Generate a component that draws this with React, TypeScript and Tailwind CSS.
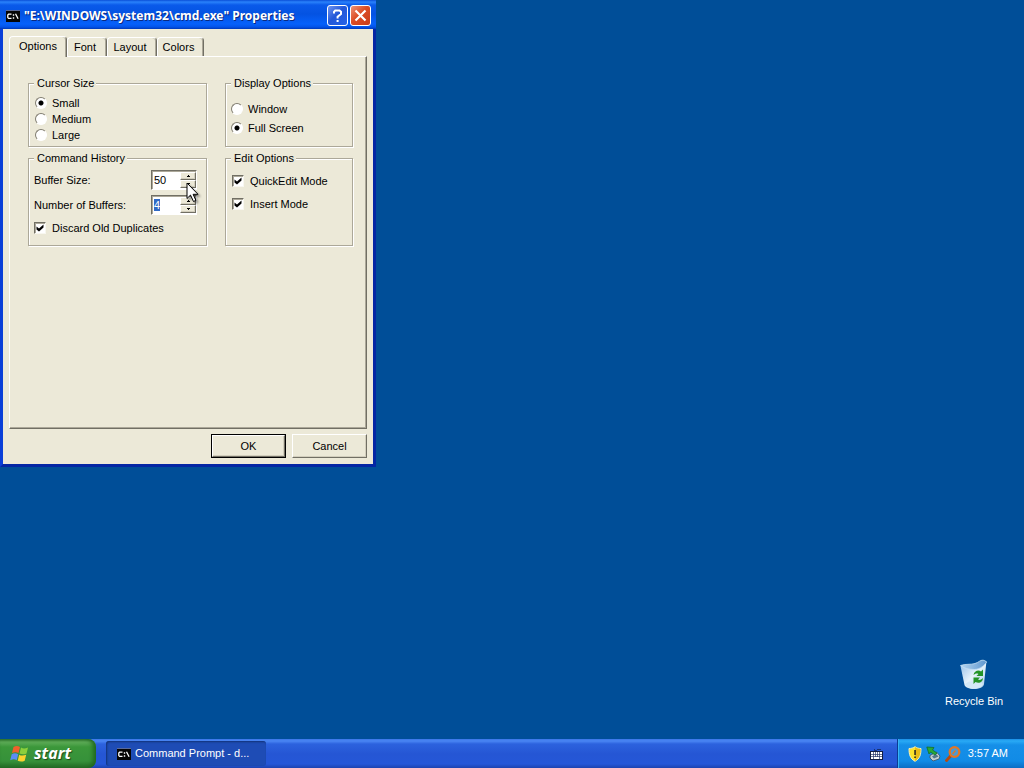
import { useEffect, useRef, useState } from "react";
import type { ReactNode, RefObject } from "react";

const raised =
  "border border-t-white border-l-white border-r-[#716f64] border-b-[#716f64] shadow-[inset_-1px_-1px_0_#d2cebd]";

function ConsoleIcon() {
  return (
    <svg width="14" height="12" viewBox="0 0 14 12" className="shrink-0" aria-hidden="true">
      <rect width="14" height="12" fill="#050505" />
      <path d="M0 .5h14" stroke="#5a6a9a" />
      <path d="M5.500 4.200H2.600L1.800 5v2.600l.8.800h2.900M9.500 3.800l2.600 5" fill="none" stroke="#fff" strokeWidth="1.300" />
      <path d="M6.800 4.300h1.400v1.400H6.800zM6.800 7.300h1.400v1.400H6.800z" fill="#fff" />
    </svg>
  );
}

function GroupBox({ title, className, children }: { title: string; className: string; children: ReactNode }) {
  return (
    <fieldset
      className={`min-w-0 border border-[#aca899] pl-[5px] pr-[9px] shadow-[1px_1px_0_#fff,inset_1px_1px_0_#fff] ${className}`}
    >
      <legend className="bg-[#ece9d8] pl-[3px] pr-0.5 leading-3.5">{title}</legend>
      {children}
    </fieldset>
  );
}

function Radio({ name, label, checked }: { name: string; label: string; checked?: boolean }) {
  return (
    <label className="flex items-center gap-[5px]">
      <input
        type="radio"
        name={name}
        defaultChecked={checked}
        className="size-3 shrink-0 appearance-none rounded-full border border-t-[#807d70] border-l-[#807d70] border-r-white border-b-white bg-white checked:bg-[radial-gradient(circle,#000_0_2px,#fff_3px)]"
      />
      {label}
    </label>
  );
}

function Check({ label }: { label: string }) {
  return (
    <label className="flex items-center gap-1.5">
      <span className="grid size-3 shrink-0">
        <input
          type="checkbox"
          defaultChecked
          className="peer col-start-1 row-start-1 size-3 appearance-none border border-t-[#716f64] border-l-[#716f64] border-r-[#f8f7f0] border-b-[#f8f7f0] bg-white shadow-[inset_1px_1px_0_#aca899]"
        />
        <svg
          viewBox="0 0 12 12"
          className="pointer-events-none invisible col-start-1 row-start-1 size-3 peer-checked:visible"
          aria-hidden="true"
        >
          <path d="M2.500 4.500l2.500 2 4.500-4v3L5 9.500l-2.500-2z" fill="#000" />
        </svg>
      </span>
      {label}
    </label>
  );
}

function Spinner({ id, initial, inputRef }: { id: string; initial: number; inputRef?: RefObject<HTMLInputElement | null> }) {
  const [value, setValue] = useState(initial);
  const step = `flex h-2 w-4 items-center justify-center bg-[#ece9d8] ${raised}`;
  return (
    <span className="flex h-5 w-[46px] border border-t-[#716f64] border-l-[#716f64] border-r-white border-b-white bg-white shadow-[inset_1px_1px_0_#aca899]">
      <input
        id={id}
        ref={inputRef}
        type="text"
        value={value}
        onChange={(e) => setValue(Number(e.target.value) || 0)}
        className="h-[18px] w-7 min-w-0 bg-transparent pl-0.5 leading-4 outline-none selection:bg-[#316ac5] selection:text-white"
      />
      <span className="flex flex-col py-px">
        <button type="button" aria-label="Increase" className={step} onClick={() => setValue(value + 1)}>
          <svg width="3" height="2" viewBox="0 0 3 2"><path d="M1 0h1v1h1v1H0V1h1z" /></svg>
        </button>
        <button type="button" aria-label="Decrease" className={step} onClick={() => setValue(value - 1)}>
          <svg width="3" height="2" viewBox="0 0 3 2"><path d="M0 0h3v1H2v1H1V1H0z" /></svg>
        </button>
      </span>
    </span>
  );
}

function Pointer() {
  return (
    <svg className="pointer-events-none absolute left-[35px] top-3 z-10 drop-shadow-[2px_2px_1px_rgba(0,0,0,0.4)]" width="13" height="21" viewBox="0 0 13 21" aria-hidden="true">
      <path d="M1 1v15.500l3.500-3.400 3 6.400 2.400-1.100-2.800-6.100H12z" fill="#fff" stroke="#000" />
    </svg>
  );
}

function Tab({ label, active, className }: { label: string; active?: boolean; className: string }) {
  return (
    <button
      type="button"
      role="tab"
      aria-selected={!!active}
      className={`rounded-t-sm border border-b-0 border-t-white border-l-white border-r-[#716f64] bg-[#ece9d8] text-center leading-4 shadow-[inset_-1px_0_0_#aca899] ${
        active ? "z-10 -mb-px h-[21px] pb-0.5" : "h-[19px] pr-1"
      } ${className}`}
    >
      {label}
    </button>
  );
}

function PropertiesWindow() {
  const buffers = useRef<HTMLInputElement>(null);
  useEffect(() => {
    buffers.current?.focus();
    buffers.current?.select();
  }, []);

  return (
    <section className="flex w-[376px] flex-col self-start border-x-3 border-b-3 border-l-[#0a3fd8] border-r-[#0426a4] border-b-[#0426a4] bg-[#ece9d8] font-['Liberation_Sans',Arial,sans-serif] text-[11px] text-black">
      <header className="-mx-[3px] flex h-[29px] items-center bg-[linear-gradient(#0a4fd8,#2a82fb_2px,#0a5aea_5px,#0453e2_14px,#0661fb_24px,#0353e8_27px,#0038b8)] pl-1.5 pr-[5px] pt-0.5">
        <ConsoleIcon />
        <h1 className="ml-1 grow whitespace-nowrap font-['Noto_Sans',sans-serif] text-xs font-bold text-white [text-shadow:1px_1px_0_#0a2a80]">
          "E:\WINDOWS\system32\cmd.exe" Properties
        </h1>
        <div className="flex gap-0.5">
          <button type="button" aria-label="Help" className="grid size-[21px] place-items-center rounded-[3px] border border-white bg-[linear-gradient(135deg,#7095f0,#2458d8_45%,#2563e8)]">
            <svg width="11" height="14" viewBox="0 0 11 14" aria-hidden="true">
              <path d="M2 4.500V2.800L3.200 1.500h4.300L9 2.800v2.300L5.600 7.800v1.700" fill="none" stroke="#fff" strokeWidth="2" />
              <path d="M4.600 11h2v2h-2z" fill="#fff" />
            </svg>
          </button>
          <button type="button" aria-label="Close" className="grid size-[21px] place-items-center rounded-[3px] border border-white bg-[linear-gradient(135deg,#ee9478,#dc4c24_45%,#c83c18)]">
            <svg width="13" height="13" viewBox="0 0 13 13" aria-hidden="true">
              <path d="M1.500 1.500l10 10M11.500 1.500l-10 10" stroke="#fff" strokeWidth="2.200" />
            </svg>
          </button>
        </div>
      </header>

      <div className="px-1.5 pb-1.5 pt-[7px]">
        <div role="tablist" className="flex items-end">
          <Tab label="Options" active className="w-[58px]" />
          <Tab label="Font" className="w-10" />
          <Tab label="Layout" className="w-[50px]" />
          <Tab label="Colors" className="w-[47px]" />
        </div>

        <div className="grid h-[373px] grid-cols-[179px_128px] content-start gap-x-[18px] gap-y-1 border border-t-white border-l-white border-r-[#716f64] border-b-[#716f64] pl-[18px] pt-[19px] shadow-[inset_-1px_-1px_0_#aca899]">
          <GroupBox title="Cursor Size" className="h-[71px]">
            <div className="flex flex-col gap-0.5 pl-px pt-1.5 leading-3.5">
              <Radio name="cursor" label="Small" checked />
              <Radio name="cursor" label="Medium" />
              <Radio name="cursor" label="Large" />
            </div>
          </GroupBox>
          <GroupBox title="Display Options" className="h-[71px]">
            <div className="flex flex-col gap-[5px] pt-3 leading-3.5">
              <Radio name="display" label="Window" />
              <Radio name="display" label="Full Screen" checked />
            </div>
          </GroupBox>
          <GroupBox title="Command History" className="h-[95px]">
            <div className="flex flex-col gap-[5px] pt-[5px]">
              <div className="flex items-center justify-between">
                <label htmlFor="buffer-size">Buffer Size:</label>
                <span className="relative">
                  <Spinner id="buffer-size" initial={50} />
                  <Pointer />
                </span>
              </div>
              <div className="flex items-center justify-between">
                <label htmlFor="buffer-count">Number of Buffers:</label>
                <Spinner id="buffer-count" initial={4} inputRef={buffers} />
              </div>
              <Check label="Discard Old Duplicates" />
            </div>
          </GroupBox>
          <GroupBox title="Edit Options" className="h-[95px]">
            <div className="flex flex-col gap-1.5 pl-px pt-2">
              <Check label="QuickEdit Mode" />
              <Check label="Insert Mode" />
            </div>
          </GroupBox>
        </div>

        <div className="flex justify-end gap-1.5 pt-[5px]">
          <div className="border border-black">
            <button type="button" className={`h-[22px] w-[73px] ${raised}`}>OK</button>
          </div>
          <button type="button" className={`h-6 w-[75px] ${raised}`}>Cancel</button>
        </div>
      </div>
    </section>
  );
}

function RecycleBin() {
  return (
    <button type="button" className="mb-[30px] mr-4 flex w-[68px] flex-col items-center gap-0.5 self-end font-['Liberation_Sans',Arial,sans-serif] text-[11px] text-white">
      <svg width="32" height="34" viewBox="0 0 32 34" aria-hidden="true">
        <defs>
          <linearGradient id="bin" x1="0" x2="1" y1="0" y2="1">
            <stop offset="0" stopColor="#8fbbe6" />
            <stop offset=".5" stopColor="#e6f2fb" />
            <stop offset="1" stopColor="#a9cdea" />
          </linearGradient>
          <linearGradient id="rim" x1="0" x2="1" y1="0" y2="0">
            <stop offset="0" stopColor="#b5d5f0" />
            <stop offset="1" stopColor="#5f97cf" />
          </linearGradient>
        </defs>
        <path d="M2.500 9c4 0 10 0 14 1 5-1 9-4 12-6L26 27c0 3-5 5-10 5-5 0-9-2-9.500-4z" fill="url(#bin)" />
        <path d="M2.500 8.500C8 6.500 12 8 17 6.500c4-1.200 5-3.500 8-3.300 1.500.2 3 1 3.500 2-2 3-6 7-12 7.300-5 0-11-1-14-4z" fill="url(#rim)" stroke="#c9e2f5" strokeWidth=".8" />
        <path d="M7 27c3-3 7-3 9-2 3-1 6 0 9 2-1 3-5 4.500-9 4.500-5 0-8-1.500-9-4.500z" fill="#d4e8f7" />
        <path d="M15.500 18c.5-4 5-5.500 7.500-3.500l2-2v6.500h-6.500l2-2c-2-1-3.500-.2-5 1zM25 21c0 4-4 6-7.500 4l-2 2v-6.500H22l-2 2c2 1 3.500 0 5-1.500z" fill="#249327" />
      </svg>
      <span className="whitespace-nowrap">Recycle Bin</span>
    </button>
  );
}

function WindowsFlag() {
  return (
    <svg width="20" height="20" viewBox="0 0 20 20" aria-hidden="true">
      <path d="M3.500 3C6 1.500 8 1.800 10 3L8.500 9C6.500 8 4.500 8 2 9z" fill="#f0602c" />
      <path d="M11 3.500c2 1.200 4 1.200 7 0l-1.500 6c-2.500 1.200-5 1-7 0z" fill="#8bcf3c" />
      <path d="M1.700 10.200c2.500-1.200 4.500-1 6.500 0l-1.500 6c-2-1.200-4-1-6.500 0z" fill="#5b8df5" />
      <path d="M9.200 10.700c2 1.200 4.500 1 7 0l-1.500 6c-2.500 1.200-5 1-7 0z" fill="#fbd22e" />
    </svg>
  );
}

function Taskbar() {
  return (
    <footer className="flex h-[29px] items-stretch bg-[linear-gradient(#3a76e8,#4a86f4_2px,#2c62de_5px,#2556d4_15px,#2557d8_25px,#1d43b0)] font-['Liberation_Sans',Arial,sans-serif] text-[11px] text-white">
      <button type="button" className="flex w-24 items-center gap-1 rounded-r-lg bg-[linear-gradient(#347a34,#5eac58_3px,#3b973a_8px,#36913a_22px,#246c27)] pl-2.5 shadow-[inset_-3px_0_4px_#20681f]">
        <WindowsFlag />
        <span className="pb-0.5 font-['Open_Sans',sans-serif] text-base font-bold italic leading-5 [text-shadow:1px_1px_1px_#1c4a1c]">start</span>
      </button>
      <button type="button" className="my-0.5 ml-2.5 flex w-40 items-center gap-1 rounded-[3px] bg-[#1e4cb5] pl-[11px] shadow-[inset_1px_1px_2px_#123276]">
        <ConsoleIcon />
        Command Prompt - d...
      </button>
      <div className="ml-auto flex items-center pr-3.5">
        <svg width="13" height="13" viewBox="0 0 13 13" aria-hidden="true">
          <path d="M6.500 5V3.500h-2V2M7 2.500h4" fill="none" stroke="#15285a" strokeWidth=".8" />
          <path d="M0 4h13v9H0z" fill="#111d44" />
          <path d="M1 5h11v7H1z" fill="#fff" />
          <path d="M1 7.500h11M1 9.500h11" stroke="#26376a" strokeWidth=".7" />
          <path d="M3.500 5v5M5.500 5v5M7.500 5v5M9.500 5v5M3.500 10v2M9.500 10v2" stroke="#26376a" strokeWidth=".7" />
        </svg>
      </div>
      <div className="flex items-center gap-1 border-l border-[#0c3c94] bg-[linear-gradient(#1b8ee6,#29aaf5_2px,#158fe8_6px,#118be6_22px,#0c6dc4)] pl-2.5 pr-4 shadow-[inset_1px_0_0_#38b4f6]">
        <svg width="14" height="16" viewBox="0 0 14 16" aria-hidden="true">
          <path d="M7 .7C5.500 2 3 2.500 1 2.500c0 6 1 10 6 12.800 5-2.800 6-6.800 6-12.800C11 2.500 8.500 2 7 .7z" fill="#fbe32c" stroke="#f7f2bb" />
          <path d="M7 1v14c4.500-2.800 5.500-6.500 5.500-12C10.500 3 8.500 2 7 1z" fill="#e7bc18" />
          <path d="M6.300 4h1.500v5H6.300zM6.300 10.500h1.500V12H6.300z" fill="#222" />
        </svg>
        <svg width="15" height="16" viewBox="0 0 15 16" aria-hidden="true">
          <path d="M4 9.500L10.500 6l3.500 4-1 3-6 2-3-3z" fill="#c3cfd0" stroke="#3b5262" strokeWidth=".8" />
          <path d="M6 10.500l4-2.500 2.500 2.500L8 12.500z" fill="#527789" />
          <path d="M.8 1l7.200.5L6.500 4l4.500 3-2 2-4.500-3L3 8z" fill="#27aa38" stroke="#156d2c" strokeWidth=".8" />
        </svg>
        <svg width="16" height="16" viewBox="0 0 16 16" aria-hidden="true">
          <path d="M6 9.500l-4.500 5" stroke="#b7480e" strokeWidth="2.800" strokeLinecap="round" />
          <circle cx="9.500" cy="6" r="4.800" fill="#4a9ad4" stroke="#e27624" strokeWidth="2.300" />
          <path d="M7.500 8l3-3.500" stroke="#e27624" strokeWidth="1.300" />
        </svg>
        <time className="ml-[3px] whitespace-nowrap">3:57 AM</time>
      </div>
    </footer>
  );
}

export default function App() {
  return (
    <div className="flex min-h-screen flex-col bg-[#004e98]">
      <main className="flex grow justify-between">
        <PropertiesWindow />
        <RecycleBin />
      </main>
      <Taskbar />
    </div>
  );
}
